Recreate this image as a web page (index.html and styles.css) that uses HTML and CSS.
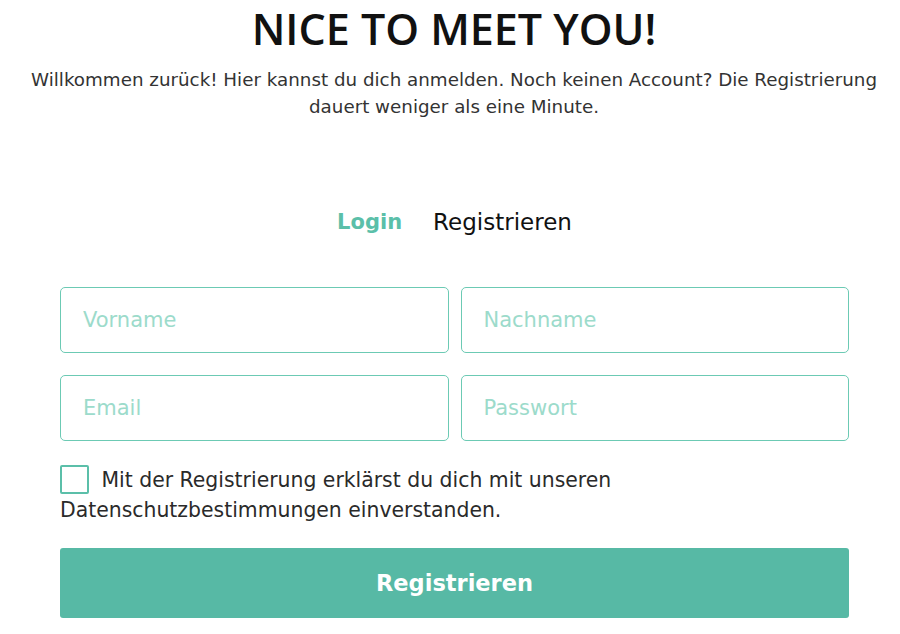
FILE: index.html
```html
<!DOCTYPE html>
<html lang="de">
<head>
<meta charset="utf-8">
<title>Nice to meet you</title>
<link rel="stylesheet" href="styles.css">
</head>
<body>
<header class="hero">
  <h1 class="title">NICE TO MEET YOU!</h1>
  <p class="intro">Willkommen zurück! Hier kannst du dich anmelden. Noch keinen Account? Die Registrierung dauert weniger als eine Minute.</p>
</header>
<main class="auth">
  <nav class="tabs">
    <a class="tab tab-active" href="#">Login</a>
    <a class="tab" href="#">Registrieren</a>
  </nav>
  <form class="form">
    <div class="grid">
      <input class="field" type="text" placeholder="Vorname">
      <input class="field" type="text" placeholder="Nachname">
      <input class="field" type="email" placeholder="Email">
      <input class="field" type="password" placeholder="Passwort">
    </div>
    <label class="consent">
      <span class="box"></span>
      <span class="consent-text">Mit der Registrierung erklärst du dich mit unseren Datenschutzbestimmungen einverstanden.</span>
    </label>
    <button class="submit" type="button">Registrieren</button>
  </form>
</main>
</body>
</html>
```

FILE: styles.css
```css
* { box-sizing: border-box; }
body {
  margin: 0;
  background: #ffffff;
  color: #1f1f1f;
  font-family: "DejaVu Sans", "Open Sans", sans-serif;
}
.hero {
  padding: 0 23px 0 31px;
  text-align: center;
}
.title {
  margin: 0;
  font-family: "Open Sans", "DejaVu Sans", sans-serif;
  font-size: 43px;
  line-height: 58px;
  font-weight: 600;
  color: #111;
}
.intro {
  margin: 8px 0 0;
  font-size: 18.3px;
  line-height: 27px;
  color: #333;
}
.auth {
  padding: 0 51px 0 60px;
}
.tabs {
  display: flex;
  justify-content: center;
  gap: 31px;
  margin-top: 87px;
  height: 30px;
  align-items: center;
}
.tab {
  font-size: 23px;
  text-decoration: none;
  color: #111;
}
.tab-active {
  color: #5bbfa9;
  font-weight: 600;
  font-size: 21px;
}
.form {
  margin-top: 50px;
}
.grid {
  display: grid;
  grid-template-columns: 1fr 1fr;
  column-gap: 12px;
  row-gap: 22px;
}
.field {
  height: 66px;
  border: 1px solid #6ccab4;
  border-radius: 5px;
  padding: 0 22px;
  font-family: inherit;
  font-size: 21px;
  color: #333;
  outline: none;
}
.field::placeholder {
  color: #9cdbcb;
}
.consent {
  display: block;
  margin-top: 24px;
  font-size: 20.4px;
  line-height: 30px;
  color: #2a2a2a;
}
.box {
  display: inline-block;
  width: 29px;
  height: 29px;
  border: 2px solid #5bbfa9;
  border-radius: 2px;
  vertical-align: -7px;
  margin-right: 6px;
}
.submit {
  display: block;
  width: 100%;
  height: 70px;
  margin-top: 23px;
  border: none;
  border-radius: 3px;
  background: #57b9a5;
  color: #fff;
  font-family: inherit;
  font-size: 22.5px;
  font-weight: 700;
}
```
